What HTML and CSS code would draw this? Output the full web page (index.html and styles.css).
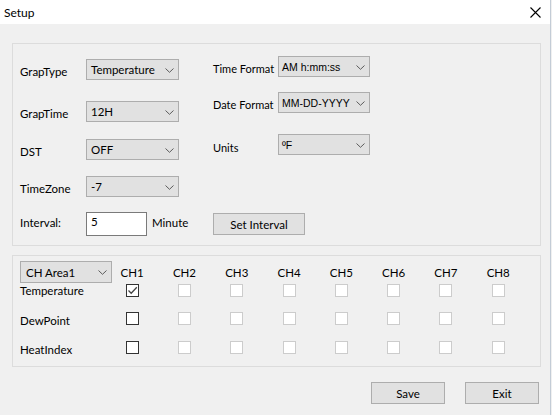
FILE: index.html
```html
<!DOCTYPE html>
<html>
<head lang="en">
	<meta charset="UTF-8">
	<title>Setup</title>
	<link rel="stylesheet" href="styles.css">
</head>
<body>

<div class="window">

	<div class="titlebar">
		<span class="title">Setup</span>
		<svg class="close" width="11" height="11" viewBox="0 0 11 11"><path d="M0.5 0.5 L10.5 10.5 M10.5 0.5 L0.5 10.5" stroke="#000" stroke-width="1.1" fill="none"/></svg>
	</div>

	<div class="group settings">
		<div class="col-left">
			<div class="field f-type">
				<label>GrapType</label>
				<div class="combo"><span>Temperature</span><svg class="chev" width="9" height="5" viewBox="0 0 9 5"><path d="M0.5 0.5 L4.5 4.3 L8.5 0.5" stroke="#5b5b5b" fill="none"/></svg></div>
			</div>
			<div class="field f-time">
				<label>GrapTime</label>
				<div class="combo"><span>12H</span><svg class="chev" width="9" height="5" viewBox="0 0 9 5"><path d="M0.5 0.5 L4.5 4.3 L8.5 0.5" stroke="#5b5b5b" fill="none"/></svg></div>
			</div>
			<div class="field f-dst">
				<label>DST</label>
				<div class="combo"><span>OFF</span><svg class="chev" width="9" height="5" viewBox="0 0 9 5"><path d="M0.5 0.5 L4.5 4.3 L8.5 0.5" stroke="#5b5b5b" fill="none"/></svg></div>
			</div>
			<div class="field f-zone">
				<label>TimeZone</label>
				<div class="combo"><span>-7</span><svg class="chev" width="9" height="5" viewBox="0 0 9 5"><path d="M0.5 0.5 L4.5 4.3 L8.5 0.5" stroke="#5b5b5b" fill="none"/></svg></div>
			</div>
		</div>
		<div class="col-right">
			<div class="field f-tf">
				<label>Time Format</label>
				<div class="combo arial"><span>AM h:mm:ss</span><svg class="chev" width="9" height="5" viewBox="0 0 9 5"><path d="M0.5 0.5 L4.5 4.3 L8.5 0.5" stroke="#5b5b5b" fill="none"/></svg></div>
			</div>
			<div class="field f-df">
				<label>Date Format</label>
				<div class="combo arial"><span>MM-DD-YYYY</span><svg class="chev" width="9" height="5" viewBox="0 0 9 5"><path d="M0.5 0.5 L4.5 4.3 L8.5 0.5" stroke="#5b5b5b" fill="none"/></svg></div>
			</div>
			<div class="field f-units">
				<label>Units</label>
				<div class="combo arial"><span>&#186;F</span><svg class="chev" width="9" height="5" viewBox="0 0 9 5"><path d="M0.5 0.5 L4.5 4.3 L8.5 0.5" stroke="#5b5b5b" fill="none"/></svg></div>
			</div>
		</div>
		<div class="interval">
			<label>Interval:</label>
			<div class="textbox">5</div>
			<span class="unit">Minute</span>
		</div>
		<div class="interval-btn">
			<button class="btn btn-set">Set Interval</button>
		</div>
	</div>

	<div class="group channels">
		<div class="ch-row ch-head">
			<div class="ch-name"><div class="combo area"><span>CH Area1</span><svg class="chev" width="9" height="5" viewBox="0 0 9 5"><path d="M0.5 0.5 L4.5 4.3 L8.5 0.5" stroke="#5b5b5b" fill="none"/></svg></div></div>
			<div class="ch">CH1</div>
			<div class="ch">CH2</div>
			<div class="ch">CH3</div>
			<div class="ch">CH4</div>
			<div class="ch">CH5</div>
			<div class="ch">CH6</div>
			<div class="ch">CH7</div>
			<div class="ch">CH8</div>
		</div>
		<div class="ch-row r1">
			<div class="ch-name">Temperature</div>
			<div class="ch"><span class="cb checked"><svg width="11" height="11" viewBox="0 0 11 11"><path d="M1.5 5.5 L4.2 8.2 L9.8 2.2" stroke="#444" stroke-width="1.3" fill="none"/></svg></span></div>
			<div class="ch"><span class="cb off"></span></div>
			<div class="ch"><span class="cb off"></span></div>
			<div class="ch"><span class="cb off"></span></div>
			<div class="ch"><span class="cb off"></span></div>
			<div class="ch"><span class="cb off"></span></div>
			<div class="ch"><span class="cb off"></span></div>
			<div class="ch"><span class="cb off"></span></div>
		</div>
		<div class="ch-row r2">
			<div class="ch-name">DewPoint</div>
			<div class="ch"><span class="cb"></span></div>
			<div class="ch"><span class="cb off"></span></div>
			<div class="ch"><span class="cb off"></span></div>
			<div class="ch"><span class="cb off"></span></div>
			<div class="ch"><span class="cb off"></span></div>
			<div class="ch"><span class="cb off"></span></div>
			<div class="ch"><span class="cb off"></span></div>
			<div class="ch"><span class="cb off"></span></div>
		</div>
		<div class="ch-row r3">
			<div class="ch-name">HeatIndex</div>
			<div class="ch"><span class="cb"></span></div>
			<div class="ch"><span class="cb off"></span></div>
			<div class="ch"><span class="cb off"></span></div>
			<div class="ch"><span class="cb off"></span></div>
			<div class="ch"><span class="cb off"></span></div>
			<div class="ch"><span class="cb off"></span></div>
			<div class="ch"><span class="cb off"></span></div>
			<div class="ch"><span class="cb off"></span></div>
		</div>
	</div>

	<div class="actions">
		<button class="btn btn-action">Save</button>
		<button class="btn btn-action">Exit</button>
	</div>

</div>

</body>
</html>
```

FILE: styles.css
```css
* {
	margin: 0;
	padding: 0;
	box-sizing: border-box;
}
html, body {
	width: 552px;
	height: 415px;
	background: #f0f0f0;
	overflow: hidden;
}
body {
	font-family: "Lato", "Liberation Sans", sans-serif;
	font-size: 11.5px;
	color: #000;
}
.window {
	width: 551px;
	height: 415px;
	border-right: 1px solid #c3ccd6;
}
.titlebar {
	height: 24px;
	background: #fff;
	display: flex;
	align-items: center;
	justify-content: space-between;
	padding: 0 9px 0 4px;
}
.title {
	font-size: 12px;
	padding-top: 1px;
}
.close {
	display: block;
	margin-top: 1px;
}

.group {
	border: 1px solid #dcdcdc;
	margin-left: 12px;
	width: 529px;
}
.settings {
	margin-top: 19px;
	height: 203px;
	padding: 12px 0 0 7px;
	display: grid;
	grid-template-columns: 193px 1fr;
	grid-template-rows: 141px auto;
	row-gap: 15px;
}
.field {
	display: flex;
	align-items: center;
	height: 21px;
}
.field label {
	display: block;
	flex-shrink: 0;
	white-space: nowrap;
	padding-top: 3px;
}
.col-left .field label {
	width: 66px;
}
.col-right .field label {
	width: 65px;
	font-size: 11px;
}
.f-type { margin-top: 3px; }
.f-time { margin-top: 21px; }
.f-dst { margin-top: 17px; }
.f-zone { margin-top: 16px; }
.f-df { margin-top: 15px; }
.f-units { margin-top: 21px; }
.f-units label { padding-top: 6px; }

.combo {
	flex-shrink: 0;
	width: 93px;
	height: 21px;
	background: #e1e1e1;
	border: 1px solid #adadad;
	display: flex;
	align-items: center;
	justify-content: space-between;
	padding: 0 4px 0 4px;
	white-space: nowrap;
	overflow: hidden;
}
.combo.arial {
	width: 92px;
	font-family: "Liberation Sans", sans-serif;
	font-size: 10.5px;
	padding-left: 3px;
}
.chev {
	display: block;
	flex-shrink: 0;
	margin-top: 1px;
}

.interval {
	display: flex;
	align-items: flex-start;
	height: 24px;
}
.interval label {
	width: 66px;
	padding-top: 4px;
}
.textbox {
	width: 61px;
	height: 24px;
	background: #fff;
	border: 1px solid #7a7a7a;
	padding: 2px 0 0 4px;
}
.unit {
	padding: 4px 0 0 5px;
}
.interval-btn {
	padding-top: 1px;
}
.btn {
	font-family: "Lato", "Liberation Sans", sans-serif;
	font-size: 11.5px;
	color: #000;
	background: #e1e1e1;
	border: 1px solid #adadad;
	height: 22px;
	display: block;
}
.btn-set {
	width: 92px;
}

.channels {
	margin-top: 9px;
	height: 112px;
	padding: 5px 0 0 7px;
}
.ch-row {
	display: flex;
	align-items: center;
	height: 13px;
}
.ch-row.ch-head {
	height: 22px;
	margin-bottom: 1px;
}
.r2 { margin-top: 15px; }
.r3 { margin-top: 16px; }
.r2 .ch-name, .r3 .ch-name {
	padding-top: 3px;
}
.ch-name {
	width: 86px;
	flex-shrink: 0;
	white-space: nowrap;
}
.combo.area {
	width: 92px;
	height: 22px;
	padding-left: 5px;
}
.ch {
	width: 52.3px;
	flex-shrink: 0;
	display: flex;
	justify-content: center;
}
.ch-head .ch {
	padding-top: 1px;
}
.cb {
	display: block;
	width: 13px;
	height: 13px;
	background: #fff;
	border: 1px solid #333;
}
.cb.off {
	border-color: #cccccc;
}
.cb svg {
	display: block;
}

.actions {
	display: flex;
	justify-content: flex-end;
	gap: 20px;
	margin-top: 15px;
	padding-right: 11px;
}
.btn-action {
	width: 74px;
}
```
